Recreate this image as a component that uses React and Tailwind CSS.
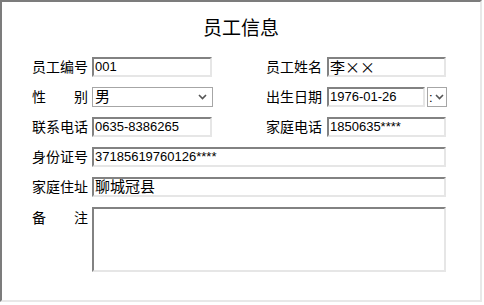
const font = { fontFamily: '"Liberation Sans", "Noto Sans CJK SC", sans-serif' }
const cjk = { fontFamily: '"Noto Sans CJK SC", sans-serif' }

function Field({ value, className = '', big = false, style }) {
  return (
    <div
      style={style}
      className={`h-[20px] bg-white border-2 border-t-[#828282] border-l-[#828282] border-r-[#e6e6e6] border-b-[#e6e6e6] flex items-center pl-[1px] overflow-hidden whitespace-nowrap text-black ${big ? 'text-[15px]' : 'text-[13px]'} ${className}`}
    >
      {value}
    </div>
  )
}

function Label({ children, spread = false }) {
  return (
    <div className={`w-[56px] shrink-0 text-[14px] leading-[20px] text-black flex ${spread ? 'justify-between' : ''}`}>
      {children}
    </div>
  )
}

function Chevron() {
  return (
    <svg width="9" height="6" viewBox="0 0 9 6" className="shrink-0">
      <path d="M1 1 L4.5 4.5 L8 1" fill="none" stroke="#555" strokeWidth="1.6" />
    </svg>
  )
}

export default function App() {
  return (
    <div className="w-[484px] h-[305px] bg-white" style={font}>
      <div className="w-[482px] h-[302px] border-2 border-t-[#7c7c7c] border-l-[#7c7c7c] border-r-[#e8e8e8] border-b-[#e8e8e8] pl-[30px] pt-[13px]">
        <h1 className="text-center text-[19px] leading-[24px] font-normal text-black pr-[30px] mb-[18px]" style={cjk}>员工信息</h1>

        <div className="flex flex-col gap-[10px]">
          {/* row 1 */}
          <div className="flex items-center">
            <Label>员工编号</Label>
            <Field value="001" className="ml-[4px] w-[120px]" />
            <div className="ml-[54px]"><Label>员工姓名</Label></div>
            <Field value="李××" big style={cjk} className="ml-[5px] w-[119px]" />
          </div>

          {/* row 2 */}
          <div className="flex items-center">
            <Label spread><span>性</span><span>别</span></Label>
            <div className="ml-[4px] w-[121px] h-[20px] border border-[#a6a6a6] bg-white flex items-center justify-between pl-[2px] pr-[5px] text-[15px] text-black">
              <span>男</span>
              <Chevron />
            </div>
            <div className="ml-[53px]"><Label>出生日期</Label></div>
            <Field value="1976-01-26" className="ml-[5px] w-[98px]" />
            <div className="ml-[2px] w-[20px] h-[20px] border border-[#a6a6a6] bg-white flex items-center pl-[1px] gap-[2px] text-[13px] text-black overflow-hidden">
              <span className="leading-none">:</span>
              <Chevron />
            </div>
          </div>

          {/* row 3 */}
          <div className="flex items-center">
            <Label>联系电话</Label>
            <Field value="0635-8386265" className="ml-[4px] w-[120px]" />
            <div className="ml-[54px]"><Label>家庭电话</Label></div>
            <Field value="1850635****" className="ml-[5px] w-[119px]" />
          </div>

          {/* row 4 */}
          <div className="flex items-center">
            <Label>身份证号</Label>
            <Field value="37185619760126****" className="ml-[4px] w-[354px]" />
          </div>

          {/* row 5 */}
          <div className="flex items-center">
            <Label>家庭住址</Label>
            <Field value="聊城冠县" big className="ml-[4px] w-[354px]" />
          </div>

          {/* row 6 */}
          <div className="flex items-start">
            <div className="pt-[1px]"><Label spread><span>备</span><span>注</span></Label></div>
            <div className="ml-[4px] w-[354px] h-[65px] bg-white border-2 border-t-[#828282] border-l-[#828282] border-r-[#e6e6e6] border-b-[#e6e6e6]" />
          </div>
        </div>
      </div>
    </div>
  )
}
